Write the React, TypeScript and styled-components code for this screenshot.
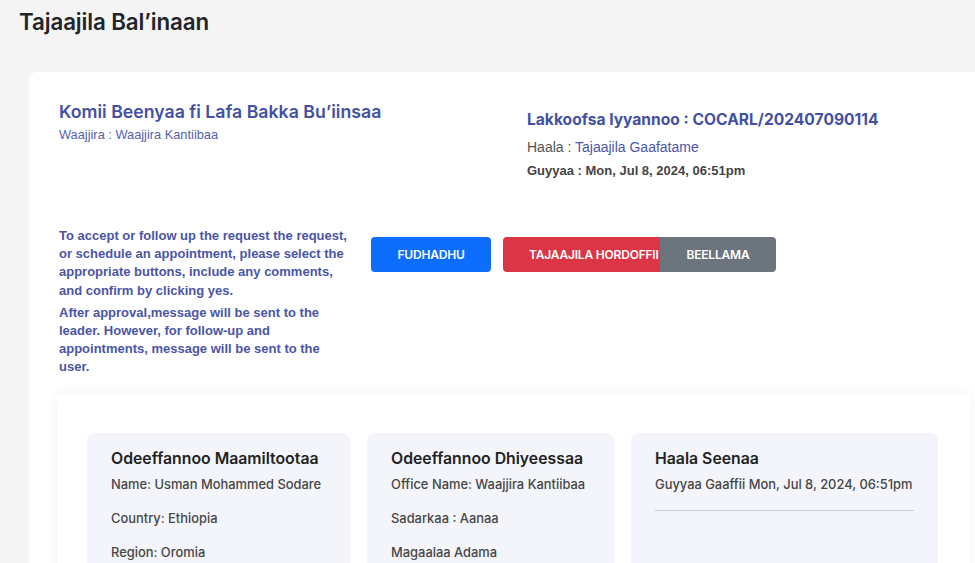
import React from 'react';
import styled, { createGlobalStyle } from 'styled-components';

const GlobalStyle = createGlobalStyle`
  html, body {
    margin: 0;
    padding: 0;
    background: #f4f4f5;
    overflow: hidden;
  }
  body {
    font-family: Inter, "Liberation Sans", sans-serif;
  }
`;

const Page = styled.div`
  width: 975px;
  height: 563px;
  overflow: hidden;
  background: #f4f4f5;
`;

const PageTitle = styled.h1`
  margin: 0;
  padding: 8px 0 0 19px;
  font-family: Inter, sans-serif;
  font-size: 22.3px;
  font-weight: 600;
  color: #212529;
  letter-spacing: -0.1px;
  height: 72px;
  box-sizing: border-box;
`;

const Card = styled.div`
  margin-left: 29px;
  width: 990px;
  background: #fff;
  border-radius: 8px;
  padding: 28px 30px 0 30px;
  box-sizing: border-box;
  min-height: 500px;
`;

const HeaderRow = styled.div`
  display: grid;
  grid-template-columns: 468px 1fr;
`;

const RequestTitle = styled.h2`
  margin: 0;
  font-family: Inter, sans-serif;
  font-size: 17.7px;
  font-weight: 600;
  color: #4350a3;
  line-height: 24px;
`;

const Office = styled.div`
  font-family: "Liberation Sans", Arial, sans-serif;
  font-size: 12.8px;
  color: #5762b0;
  margin-top: 3px;
`;

const MetaCol = styled.div`
  padding-top: 10px;
`;

const RefNumber = styled.div`
  font-family: Inter, sans-serif;
  font-size: 15.6px;
  font-weight: 700;
  color: #4350a3;
  line-height: 20px;
`;

const StatusLine = styled.div`
  font-family: "Liberation Sans", Arial, sans-serif;
  font-size: 14px;
  color: #555;
  margin-top: 9px;
  span {
    color: #4a56ab;
  }
`;

const DateLine = styled.div`
  font-family: "Liberation Sans", Arial, sans-serif;
  font-size: 13px;
  font-weight: 700;
  color: #444;
  margin-top: 8px;
`;

const ActionRow = styled.div`
  display: flex;
  margin-top: 49px;
`;

const Instructions = styled.div`
  width: 290px;
  margin-right: 22px;
  font-family: "Liberation Sans", Arial, sans-serif;
  font-size: 13px;
  font-weight: 700;
  color: #4a55a8;
  line-height: 18.2px;
  p {
    margin: 0 0 4px 0;
  }
`;

const Buttons = styled.div`
  display: flex;
  align-items: flex-start;
  margin-top: 10px;
  gap: 12px;
`;

const Group = styled.div`
  display: flex;
`;

const Button = styled.button<{ $bg: string; $w: number; $pad?: number; $join?: 'left' | 'right' }>`
  position: relative;
  width: ${p => p.$w}px;
  height: 35px;
  border: none;
  background: ${p => p.$bg};
  color: #fff;
  font-family: Inter, "Open Sans", sans-serif;
  font-size: 12px;
  font-weight: 600;
  letter-spacing: -0.2px;
  white-space: nowrap;
  overflow: hidden;
  text-align: ${p => (p.$pad ? 'left' : 'center')};
  padding: 0 0 0 ${p => p.$pad ?? 0}px;
  border-radius: ${p => (p.$join === 'left' ? '4px 0 0 4px' : p.$join === 'right' ? '0 4px 4px 0' : '4px')};
  cursor: pointer;
`;

const Panel = styled.div`
  margin: 13px 0 0 -2px;
  width: 913px;
  background: #fff;
  box-shadow: 0 0 14px rgba(0, 0, 0, 0.06);
  padding: 39px 30px 30px 30px;
  box-sizing: border-box;
  height: 200px;
`;

const InfoRow = styled.div`
  display: flex;
  gap: 17px;
`;

const InfoCard = styled.div<{ $w: number }>`
  width: ${p => p.$w}px;
  background: #f3f5fa;
  border-radius: 8px;
  padding: 15px 24px;
  box-sizing: border-box;
  height: 160px;
`;

const InfoTitle = styled.h3`
  margin: 0;
  font-family: Inter, sans-serif;
  font-size: 15.8px;
  font-weight: 600;
  color: #222;
  line-height: 22px;
`;

const InfoItem = styled.div`
  font-family: Inter, sans-serif;
  font-size: 12.9px;
  font-weight: 500;
  color: #474747;
  line-height: 18px;
  margin-top: 6px;
  & + & {
    margin-top: 16px;
  }
`;

const Divider = styled.hr`
  border: none;
  border-top: 1px solid #c9ccd6;
  margin: 16px 0 0 0;
`;

export default function App() {
  return (
    <Page>
      <GlobalStyle />
      <PageTitle>Tajaajila Bal’inaan</PageTitle>
      <Card>
        <HeaderRow>
          <div>
            <RequestTitle>Komii Beenyaa fi Lafa Bakka Bu’iinsaa</RequestTitle>
            <Office>Waajjira : Waajjira Kantiibaa</Office>
          </div>
          <MetaCol>
            <RefNumber>Lakkoofsa Iyyannoo : COCARL/202407090114</RefNumber>
            <StatusLine>
              Haala : <span>Tajaajila Gaafatame</span>
            </StatusLine>
            <DateLine>Guyyaa : Mon, Jul 8, 2024, 06:51pm</DateLine>
          </MetaCol>
        </HeaderRow>
        <ActionRow>
          <Instructions>
            <p>
              To accept or follow up the request the request, or schedule an appointment, please select the
              appropriate buttons, include any comments, and confirm by clicking yes.
            </p>
            <p>After approval,message will be sent to the leader. However, for follow-up and appointments, message will be sent to the user.</p>
          </Instructions>
          <Buttons>
            <Button $bg="#0d6efd" $w={120}>FUDHADHU</Button>
            <Group>
              <Button $bg="#dc3545" $w={157} $pad={26} $join="left">TAJAAJILA HORDOFFII</Button>
              <Button $bg="#6c757d" $w={116} $join="right">BEELLAMA</Button>
            </Group>
          </Buttons>
        </ActionRow>
        <Panel>
          <InfoRow>
            <InfoCard $w={263}>
              <InfoTitle>Odeeffannoo Maamiltootaa</InfoTitle>
              <InfoItem>Name: Usman Mohammed Sodare</InfoItem>
              <InfoItem>Country: Ethiopia</InfoItem>
              <InfoItem>Region: Oromia</InfoItem>
            </InfoCard>
            <InfoCard $w={247}>
              <InfoTitle>Odeeffannoo Dhiyeessaa</InfoTitle>
              <InfoItem>Office Name: Waajjira Kantiibaa</InfoItem>
              <InfoItem>Sadarkaa : Aanaa</InfoItem>
              <InfoItem>Magaalaa Adama</InfoItem>
            </InfoCard>
            <InfoCard $w={307}>
              <InfoTitle>Haala Seenaa</InfoTitle>
              <InfoItem>Guyyaa Gaaffii Mon, Jul 8, 2024, 06:51pm</InfoItem>
              <Divider />
            </InfoCard>
          </InfoRow>
        </Panel>
      </Card>
    </Page>
  );
}
